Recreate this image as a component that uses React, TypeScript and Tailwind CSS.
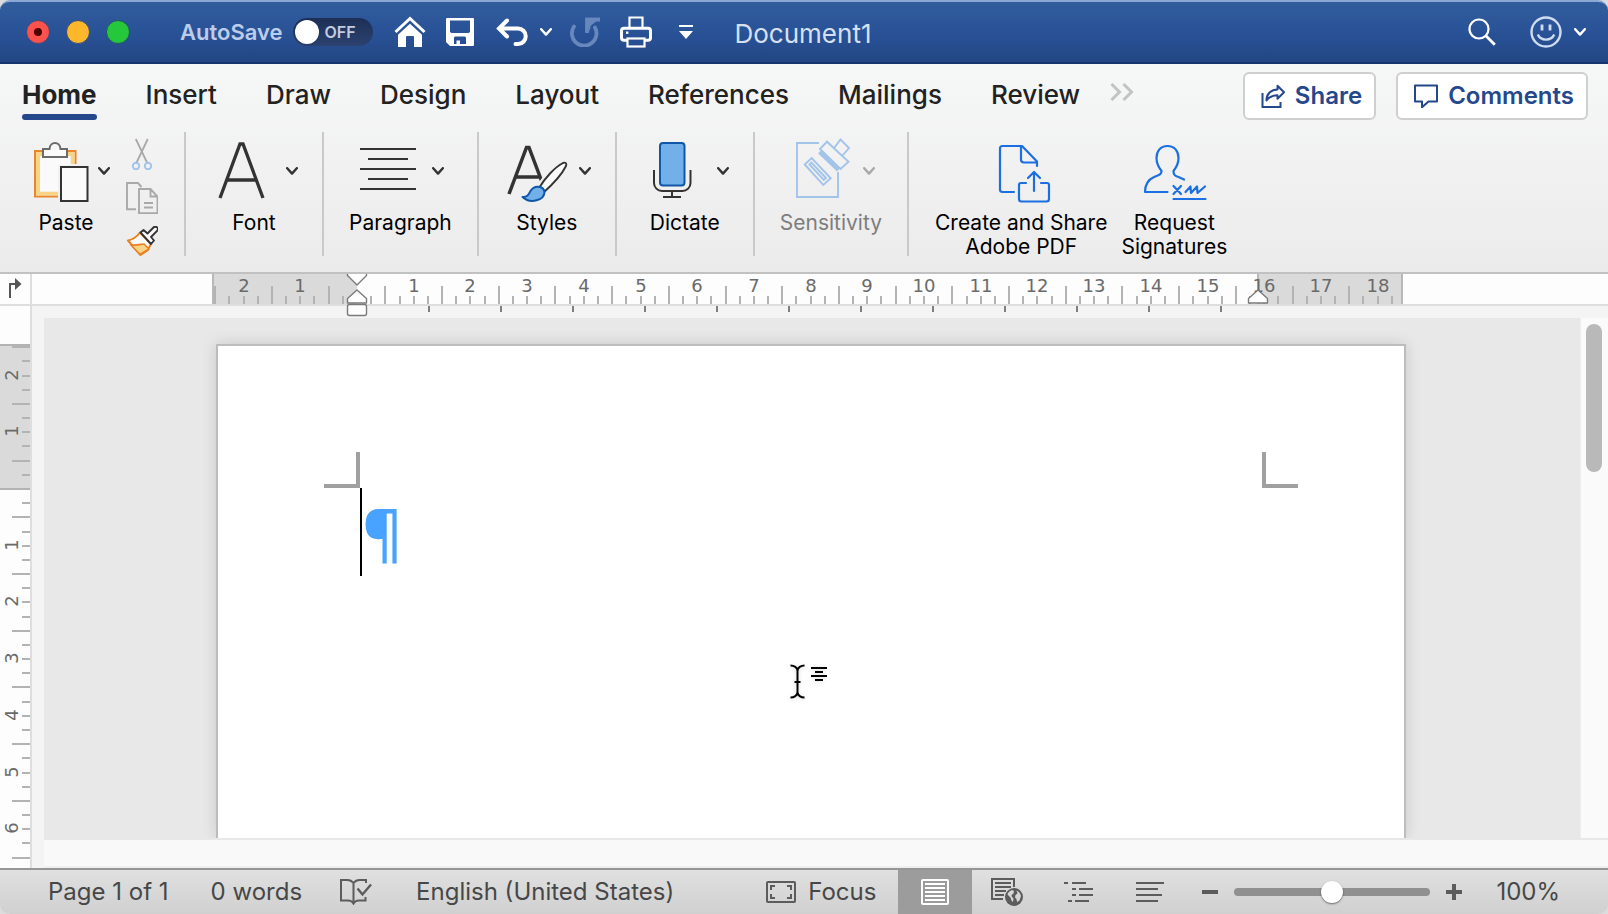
import type { ReactNode } from "react";

const CM = 56.7;

function Chevron({ className = "" }: { className?: string }) {
  return (
    <svg className={`h-2 w-3 shrink-0 ${className}`} viewBox="0 0 12 8" fill="none" stroke="currentColor" strokeWidth="2.4" strokeLinecap="round" strokeLinejoin="round" aria-hidden="true">
      <path d="M1.2 1.2 6 6.6 10.8 1.2" />
    </svg>
  );
}

/* ---------- title bar ---------- */

function TitleBar() {
  return (
    <header className="flex h-16 shrink-0 items-center rounded-t-[10px] border-t-2 border-b-2 border-t-[#8ba7d3] border-b-[#17356f] bg-gradient-to-b from-[#315d9c] via-[#295297] to-[#234784] pr-[22px] pl-[26px] text-white">
      <div className="flex gap-4">
        <button aria-label="Close" className="flex size-6 items-center justify-center rounded-full border border-[#3a4a80] bg-[#fc524d]">
          <span className="size-2 rounded-full bg-[#4d0000]" />
        </button>
        <button aria-label="Minimize" className="size-6 rounded-full border border-[#3a4a80] bg-[#fdb72b]" />
        <button aria-label="Zoom window" className="size-6 rounded-full border border-[#24506a] bg-[#25c83b]" />
      </div>
      <label className="ml-[50px] flex items-center gap-2.5 text-[22px] font-semibold text-[#bccdec]">
        AutoSave
        <span className="relative flex h-7 w-20 items-center rounded-full bg-gradient-to-b from-[#1d2f55] to-[#2c4270]">
          <input type="checkbox" className="peer absolute inset-0 cursor-pointer appearance-none rounded-full" />
          <span className="pointer-events-none ml-0.5 size-6 rounded-full bg-white shadow" />
          <span className="pointer-events-none ml-1.5 text-base text-[#c3cde0]">OFF</span>
        </span>
      </label>
      <button aria-label="Home" className="ml-[21px]">
        <svg className="h-8 w-8" viewBox="0 0 32 32" fill="none">
          <path d="M1.500 16 16 2.500 30.500 16" stroke="#fff" strokeWidth="3" />
          <path d="M16 7.800 4 18.800V31h8V21a1 1 0 0 1 1-1h6a1 1 0 0 1 1 1v10h8V18.800Z" fill="#fff" />
        </svg>
      </button>
      <button aria-label="Save" className="ml-5">
        <svg className="size-7" viewBox="0 0 28 28">
          <path fillRule="evenodd" fill="#fff" d="M1 0h26a1 1 0 0 1 1 1v26a1 1 0 0 1-1 1H4L0 24V1a1 1 0 0 1 1-1Zm3 2.600V14l1.500 1h17l1.500-1V2.600Zm4 17V26h2.500v-3.500H14V26h6v-6.400l-1-1H9Z" />
        </svg>
      </button>
      <button aria-label="Undo" className="ml-[22px]">
        <svg className="h-7 w-8" viewBox="0 0 32 28" fill="none" stroke="#fff" strokeWidth="4" strokeLinecap="round">
          <path d="M11 2.500 3 10.500 11 18.500M4 10.500h18a7.500 7.500 0 0 1 0 15.500h-2.500" />
        </svg>
      </button>
      <button aria-label="Undo history" className="ml-3">
        <Chevron />
      </button>
      <button aria-label="Redo" className="ml-[18px]" disabled>
        <svg className="size-[30px]" viewBox="0 0 30 30" fill="none" stroke="#6787bd" strokeWidth="3.800">
          <path d="M4 9.500A12.300 12.300 0 1 0 25 10.500" strokeLinecap="round" />
          <path d="M17 16V2.500H30" />
          <path d="M17 3h11l-7 5.500-2 6.500Z" fill="#6787bd" stroke="none" />
        </svg>
      </button>
      <button aria-label="Print" className="ml-5">
        <svg className="size-8" viewBox="0 0 32 32" fill="none" stroke="#fff">
          <path d="M9.500 12V1.500h13V12" strokeWidth="2.200" />
          <rect x="1.500" y="12.200" width="29" height="12" rx="2.500" strokeWidth="3" />
          <rect x="7.500" y="22.500" width="17" height="8" fill="#274e92" strokeWidth="2.200" />
          <rect x="6" y="15.500" width="2.400" height="2.400" fill="#fff" stroke="none" />
        </svg>
      </button>
      <button aria-label="Customize toolbar" className="ml-[27px]">
        <svg className="h-4 w-3.5" viewBox="0 0 14 16" fill="#fff">
          <path d="M0 1h14v2H0ZM0 7h14L7 15Z" />
        </svg>
      </button>
      <h1 className="ml-[42px] pt-1 text-[26px] leading-8 font-normal text-[#d7e0f1]">Document1</h1>
      <button aria-label="Search" className="ml-auto">
        <svg className="size-7" viewBox="0 0 28 28" fill="none" stroke="#fff" strokeWidth="2.200">
          <circle cx="11" cy="11" r="9.500" />
          <path d="m17.800 17.800 9 9" strokeWidth="2.800" />
        </svg>
      </button>
      <button aria-label="Send feedback" className="ml-[34px] flex items-center gap-3">
        <svg className="size-8" viewBox="0 0 32 32" fill="none" stroke="#d0dcf0" strokeWidth="2.400">
          <circle cx="16" cy="16" r="14.500" />
          <path d="M12 8.500v6M20 8.500v6" strokeWidth="2.800" />
          <path d="M7.800 18.500c3 6.800 13.400 6.800 16.400 0" />
        </svg>
        <Chevron />
      </button>
    </header>
  );
}

/* ---------- ribbon ---------- */

const TABS = ["Home", "Insert", "Draw", "Design", "Layout", "References", "Mailings", "Review"];

function Tabs() {
  return (
    <div className="flex items-start pt-2 pr-5 pl-[22px]">
      <nav className="flex items-start gap-[49px] pt-[7px] text-[26px] leading-8 text-[#222]">
        {TABS.map((tab, i) => (
          <button key={tab} className={i === 0 ? "flex flex-col gap-[3px] font-bold" : "font-medium"}>
            {tab}
            {i === 0 && <span className="h-1.5 w-full rounded-full bg-[#25488c]" />}
          </button>
        ))}
      </nav>
      <button aria-label="More tabs" className="ml-[30px] pt-[11px]">
        <svg className="h-[18px] w-6" viewBox="0 0 24 18" fill="none" stroke="#c3c3c3" strokeWidth="3">
          <path d="m1.500 1 8 8-8 8M13.500 1l8 8-8 8" />
        </svg>
      </button>
      <div className="ml-auto flex gap-5 text-[24px] leading-[30px] font-semibold text-[#25488c]">
        <button className="flex h-12 items-center gap-2.5 rounded-md border-2 border-[#cfcfcf] bg-white pr-3 pl-4">
          <svg className="h-6 w-6" viewBox="0 0 24 24" fill="none" stroke="currentColor" strokeWidth="2">
            <path d="M1.500 9v14h18v-5" />
            <path d="M16.500 1.800 23 8.300l-6.500 6.500v-3.600c-5 0-8 1.300-11 5.300 0-6.500 4.500-11 11-11Z" strokeLinejoin="round" />
          </svg>
          Share
        </button>
        <button className="flex h-12 items-center gap-2.5 rounded-md border-2 border-[#cfcfcf] bg-white pr-3 pl-4">
          <svg className="h-6 w-6" viewBox="0 0 24 24" fill="none" stroke="currentColor" strokeWidth="2" strokeLinejoin="round">
            <path d="M1 1.500h22v16h-8.500L8 23.300V17.500H1Z" />
          </svg>
          Comments
        </button>
      </div>
    </div>
  );
}

function BigIcon({ viewBox, children }: { viewBox: string; children: ReactNode }) {
  return (
    <svg className="h-[66px] w-[66px] shrink-0 overflow-visible" viewBox={viewBox} fill="none" aria-hidden="true">
      {children}
    </svg>
  );
}

function Tool({ label, icon, disabled = false }: { label: string; icon: ReactNode; disabled?: boolean }) {
  return (
    <button disabled={disabled} className={disabled ? "flex flex-col items-center text-[#7d7d7d]" : "flex flex-col items-center text-black"}>
      <span className="flex items-center gap-2.5">
        {icon}
        <Chevron className={disabled ? "mt-1 text-[#a9a9a9]" : "mt-1 text-[#333]"} />
      </span>
      <span className="mt-[9px] px-px text-[21px] leading-6">{label}</span>
    </button>
  );
}

function Group({ children }: { children: ReactNode }) {
  return <div className="flex min-w-[138px] justify-center border-r-2 border-[#c9c9c9] px-6 pt-1">{children}</div>;
}

function Ribbon() {
  return (
    <section className="flex h-[208px] shrink-0 flex-col justify-between bg-gradient-to-b from-[#f6f7f7] via-[#f1f1f1] to-[#ebebeb] pb-4">
      <Tabs />
      <div className="flex h-[124px]">
        <div className="flex border-r-2 border-[#c9c9c9] pr-[26px] pl-[22px]">
          <div className="w-22 pt-1">
            <Tool
              label="Paste"
              icon={
                <BigIcon viewBox="22 136 66 66">
                  <path d="M58 196.500H35V151h40.500v13" stroke="#e9852a" strokeWidth="2" />
                  <path d="M58 195.500H36V152h38.500v12h-4v-8H40v35.500h18Z" fill="#f8d487" />
                  <path d="M40 156h30.500v9H58v26.500H40Z" fill="#fafafa" />
                  <path d="M43 157v-8h6.500c.5-8 10.500-8 11 0H67v8Z" fill="#fafafa" stroke="#6b6b6b" strokeWidth="2" />
                  <rect x="61" y="167" width="26.500" height="34" fill="#fafafa" stroke="#333" strokeWidth="2" />
                </BigIcon>
              }
            />
          </div>
          <div className="ml-4 flex flex-col gap-3">
            <button aria-label="Cut" disabled className="mt-1.5">
              <svg className="size-8" viewBox="126 138 32 32" fill="none">
                <path d="M135.800 139l11.700 24.500M147.800 139l-11.700 24.500" stroke="#a9a9a9" strokeWidth="1.800" />
                <circle cx="136" cy="166" r="3.200" stroke="#a3c3e8" strokeWidth="1.900" />
                <circle cx="148" cy="166" r="3.200" stroke="#a3c3e8" strokeWidth="1.900" />
              </svg>
            </button>
            <button aria-label="Copy" disabled>
              <svg className="size-8" viewBox="126 182 32 32" fill="none" stroke="#a9a9a9" strokeWidth="1.900">
                <path d="M136 209.200h-9V183h11l3.500 4" />
                <path d="M139 189h11.500l7 7.500v16.700H139ZM150.500 189v7.500h7M144 203h9M144 207.500h9" />
              </svg>
            </button>
            <button aria-label="Format painter">
              <svg className="size-8" viewBox="126 226 32 32" fill="none">
                <path d="M128 240.500c5-1 9-4 12-8l11 11.500-3.500 6.500-7 4.500Z" fill="#fafafa" stroke="#ea8024" strokeWidth="2" strokeLinejoin="round" />
                <path d="M131 245c5 .5 9-.5 13-1l5 5-9 5.500Z" fill="#f8d487" stroke="#ea8024" strokeWidth="1.600" strokeLinejoin="round" />
                <path d="m140.500 232.500 3-2.500 4 3.500 6.500-6.500c2.500-1 4.500 1 3.500 3.500l-6.500 6.500 3 3.500-3 3.500Z" fill="#fafafa" stroke="#333" strokeWidth="1.900" strokeLinejoin="round" />
              </svg>
            </button>
          </div>
        </div>

        <Group>
          <Tool
            label="Font"
            icon={
              <BigIcon viewBox="210 136 66 66">
                <path d="M220 198 240 144h3l20 54M227 180h29" stroke="#333" strokeWidth="3.300" />
              </BigIcon>
            }
          />
        </Group>
        <Group>
          <Tool
            label="Paragraph"
            icon={
              <BigIcon viewBox="356 136 66 66">
                <path d="M360 149h56M368 159h40M360 169h56M368 179h40M360 189h56" stroke="#333" strokeWidth="2" />
              </BigIcon>
            }
          />
        </Group>
        <Group>
          <Tool
            label="Styles"
            icon={
              <BigIcon viewBox="502 136 66 66">
                <path d="M508 194 525.500 147.500h2.500L541 182M514 177h24" stroke="#333" strokeWidth="3.500" />
                <path d="M537 188c6-10 17-21 25-25 2.500-1 4 .5 3 3-4 8-14 19-23 27Z" fill="#fafafa" stroke="#f0f0f0" strokeWidth="5" />
                <path d="M538 188c6-10 16-21 24-25 2.500-1 4 .5 3 3-4 8-14 19-23 27Z" fill="#fafafa" stroke="#333" strokeWidth="1.900" />
                <path d="M521.500 197c5 .5 6-2.500 8-6 4-6.500 13-5 14 1 0 8-14 12.500-22 5Z" fill="#72b0ea" stroke="#0f57a8" strokeWidth="2" strokeLinejoin="round" />
              </BigIcon>
            }
          />
        </Group>
        <Group>
          <Tool
            label="Dictate"
            icon={
              <BigIcon viewBox="640 136 66 66">
                <rect x="659" y="143" width="24.500" height="42.500" rx="3" fill="#72b0ea" stroke="#0f57a8" strokeWidth="2" />
                <path d="M653 170v13a8 8 0 0 0 8 8h20.500a8 8 0 0 0 8-8v-13M671 191v6M662 197h18" stroke="#333" strokeWidth="2" />
              </BigIcon>
            }
          />
        </Group>
        <Group>
          <Tool
            label="Sensitivity"
            disabled
            icon={
              <BigIcon viewBox="787 136 66 66">
                <g stroke="#a3c4e9" strokeWidth="1.900">
                  <path d="M819 143h-22v54h41v-25" />
                  <path d="m804.700 164.500 7-6.500 19 20.300-7.400 6.700Z" />
                  <path d="m809.500 164.500 2-2 14.500 15.500-2.200 2Z" />
                  <path d="m820 149 7-7.300 21.500 20-8 7.300ZM834.500 147.500l6-8 8.500 8.500-6.500 7.500" />
                  <path d="m819.500 152 19 18" strokeWidth="4" />
                </g>
              </BigIcon>
            }
          />
        </Group>

        <div className="flex gap-3.5 pt-1 pl-[26px]">
          <button className="flex flex-col items-center">
            <BigIcon viewBox="990 136 66 66">
              <g stroke="#1b6fe2" strokeWidth="2.200" strokeLinecap="round" strokeLinejoin="round">
                <path d="M1016 192h-11.500a2.500 2.500 0 0 1-2.500-2.500v-41a2.500 2.500 0 0 1 2.500-2.500H1024l15 15.500v4.500M1023 146.500v13a3 3 0 0 0 3 3h12.500" />
                <path d="M1028 183h-5a2 2 0 0 0-2 2v14a2.500 2.500 0 0 0 2.500 2.500h25a2.500 2.500 0 0 0 2.500-2.500v-14a2 2 0 0 0-2-2h-6M1036 191v-18.500M1030 178l6-6 6 6" />
              </g>
            </BigIcon>
            <span className="mt-[9px] text-[21px] leading-6">
              Create and Share
              <br />
              Adobe PDF
            </span>
          </button>
          <button className="flex flex-col items-center">
            <BigIcon viewBox="1140 136 66 66">
              <g stroke="#1b6fe2" strokeWidth="2.200" strokeLinecap="round" strokeLinejoin="round">
                <path d="M1166.500 192h-22.500c0-8 3.500-12.500 9-15 4-2 7.500-1.500 7.500-6-2-2.500-5-6.500-5-13 0-7 4-12 11-12s11 5 11 12c0 6.500-3 10.500-5 13 0 4 1.500 5 5 6l5.500 2.500" />
                <path d="m1172.500 186 7.500 8m0-8-7.500 8M1184.500 192l5-5.500.5 6.500 6-6.500.5 6.500 7.500-6.500M1172.500 199h32" />
              </g>
            </BigIcon>
            <span className="mt-[9px] text-[21px] leading-6">
              Request
              <br />
              Signatures
            </span>
          </button>
        </div>
      </div>
    </section>
  );
}

/* ---------- rulers ---------- */

function quarterMarks(from: number, to: number) {
  const marks: number[] = [];
  for (let q = from; q <= to; q++) if (q !== 0) marks.push(q);
  return marks;
}

const isHalf = (q: number) => Math.abs(q) % 4 === 2;

function HorizontalRuler() {
  const origin = 144;
  const labels = [-2, -1, ...Array.from({ length: 18 }, (_, i) => i + 1)];
  return (
    <div className="flex h-[34px] shrink-0 border-t-2 border-b-2 border-t-[#c1c1c1] border-b-[#dedede] bg-[#fdfdfd]">
      <button aria-label="Tab stop type" className="w-8 shrink-0 border-r-2 border-[#dedede]">
        <svg className="h-[30px] w-[30px]" viewBox="0 0 30 30">
          <path d="M10 24V10h6" fill="none" stroke="#555" strokeWidth="2" />
          <path d="M15 4v12l6.500-6Z" fill="#555" />
        </svg>
      </button>
      <div className="flex flex-1 justify-center pr-6">
        <svg className="relative z-10 h-[30px] w-[1190px] shrink-0 overflow-visible" viewBox="0 0 1190 30">
          <rect width="144" height="30" fill="#dadada" />
          <rect x="1045" width="145" height="30" fill="#dadada" />
          <path d="M0 0v30M1189 0v30M1045 0v30" stroke="#b8b8b8" strokeWidth="2" />
          {quarterMarks(-10, 73).map((q) => {
            const x = Math.round(origin + (q * CM) / 4);
            return <path key={q} d={`M${x} ${isHalf(q) ? 12 : 22}V30`} stroke="#b3b3b3" strokeWidth="2" />;
          })}
          {Array.from({ length: 12 }, (_, i) => (
            <path key={i} d={`M${216 + i * 72} 32v6`} stroke="#808080" strokeWidth="2" />
          ))}
          <g fill="#6a6a6a" fontFamily="'DejaVu Sans', sans-serif" fontSize="18" textAnchor="middle">
            {labels.map((n) => (
              <text key={n} x={Math.round(origin + n * CM)} y="18">
                {Math.abs(n)}
              </text>
            ))}
          </g>
          <g fill="#fff" stroke="#7a7a7a" strokeWidth="1.400" strokeLinejoin="round">
            <path d="M134.500 0v1.500L144 11l9.500-9.500V0" />
            <path d="M144 16l9.500 8.500V29h-19v-4.500Z" />
            <rect x="134.500" y="30.500" width="19" height="11" rx="2" />
            <path d="M1045 16l9.500 8.500V29h-19v-4.500Z" />
          </g>
        </svg>
      </div>
    </div>
  );
}

function VerticalRuler() {
  const origin = 183;
  return (
    <div className="w-8 shrink-0 overflow-hidden border-r-2 border-[#dedede] bg-[#fdfdfd]">
      <svg className="h-[562px] w-[30px]" viewBox="0 0 30 562">
        <rect y="38" width="30" height="145" fill="#dadada" />
        <path d="M0 39h30M0 183h30" stroke="#b3b3b3" strokeWidth="2" />
        {quarterMarks(-10, 26).map((q) => {
          const y = Math.round(origin + (q * CM) / 4);
          return <path key={q} d={`M${isHalf(q) ? 12 : 22} ${y}H30`} stroke="#b3b3b3" strokeWidth="2" />;
        })}
        <g fill="#6a6a6a" fontFamily="'DejaVu Sans', sans-serif" fontSize="18" textAnchor="middle">
          {[-2, -1, 1, 2, 3, 4, 5, 6].map((n) => (
            <text key={n} transform={`translate(18 ${Math.round(origin + n * CM) - 1}) rotate(-90)`}>
              {Math.abs(n)}
            </text>
          ))}
        </g>
      </svg>
    </div>
  );
}

/* ---------- document ---------- */

function Page() {
  return (
    <main className="relative min-w-0 flex-1 overflow-hidden bg-[#e8e8e8] pt-[26px] pr-0.5">
      <article className="mx-auto h-full w-[1190px] border-2 border-b-0 border-[#bdbdbd] bg-white pt-[106px] shadow-[0_0_14px_rgba(0,0,0,0.14)]">
        <div className="flex justify-between px-[106px]">
          <span className="h-9 w-9 border-r-4 border-b-4 border-[#a0a0a0]" />
          <span className="h-9 w-9 border-b-4 border-l-4 border-[#a0a0a0]" />
        </div>
        <div role="textbox" aria-label="Document text" className="flex h-[88px] items-center pl-[142px] font-['Open_Sans',sans-serif] text-[62px] leading-[88px] font-semibold text-[#47a3ff]">
          <span className="h-full w-0.5 bg-black" />
          <span>¶</span>
        </div>
      </article>
      <svg className="pointer-events-none absolute top-[342px] left-[742px] h-11 w-12 drop-shadow-sm" viewBox="0 0 48 44" fill="none" stroke="#000" strokeWidth="2">
        <path d="M4.500 5.500c3.500 0 7 2 7 5.500 0-3.500 3.500-5.500 7-5.500M11.500 10v23M4.500 37.500c3.500 0 7-2 7-5.500 0 3.500 3.500 5.500 7 5.500M8.500 22h6" />
        <path d="M25 8h16M29 12h8M25 16h16M29 20h8" />
      </svg>
    </main>
  );
}

function Workspace() {
  return (
    <div className="flex min-h-0 flex-1">
      <VerticalRuler />
      <div className="flex min-w-0 flex-1 flex-col bg-[#f4f4f4] pt-3 pl-3">
        <div className="flex min-h-0 flex-1">
          <Page />
          <div className="w-7 shrink-0 border-l border-[#efefef] bg-[#fafafa] px-[5px] pt-1.5">
            <div role="scrollbar" aria-label="Scroll document" aria-controls="root" aria-valuenow={0} className="h-[148px] w-4 rounded-full bg-[#b9b9b9]" />
          </div>
        </div>
        <div className="h-[30px] shrink-0 border-t-2 border-b-2 border-t-[#e8e8e8] border-b-[#efefef] bg-[#f9f9f9]" />
      </div>
    </div>
  );
}

/* ---------- status bar ---------- */

function StatusBar() {
  return (
    <footer className="flex h-[46px] shrink-0 items-center rounded-b-[10px] border-t-2 border-[#969696] bg-gradient-to-b from-[#e0e0e0] to-[#d0d0d0] pr-12 pl-12 text-[24px] text-[#474747]">
      <span>Page 1 of 1</span>
      <span className="ml-[42px]">0 words</span>
      <button aria-label="Spelling and grammar" className="ml-[38px]">
        <svg className="h-[26px] w-8" viewBox="0 0 32 26" fill="none" stroke="#5c5c5c" strokeWidth="2">
          <path d="M13.500 25V4c-2-2.500-4-3-6-3H1v20.500h7c3 0 4.500 1 5.500 3 1-2 2.500-3 5.500-3h6.500V18M13.500 4c2-2.500 4-3 6-3H26v3" />
          <path d="m17.500 9.500 5 6 8.500-10" strokeWidth="2.400" />
        </svg>
      </button>
      <button className="ml-11">English (United States)</button>

      <div className="ml-auto flex h-full items-center">
        <button className="flex items-center gap-3">
          <svg className="h-[22px] w-[30px]" viewBox="0 0 30 22" fill="none" stroke="#5c5c5c" strokeWidth="2">
            <rect x="1" y="1" width="28" height="20" rx="1" />
            <path d="M5 9V5h4M21 5h4v4M25 13v4h-4M9 17H5v-4" />
          </svg>
          Focus
        </button>
        <button aria-label="Print layout" aria-pressed="true" className="ml-[22px] flex h-full w-[74px] items-center justify-center bg-[#9c9c9c]">
          <svg className="h-[26px] w-7" viewBox="0 0 28 26" fill="none" stroke="#fff" strokeWidth="2">
            <rect x="1" y="1" width="26" height="24" rx="1" />
            <path d="M4 5h20M4 9h20M4 13h20M4 17h20M4 21h20" />
          </svg>
        </button>
        <button aria-label="Web layout" className="ml-[19px]">
          <svg className="h-7 w-8" viewBox="0 0 32 28" fill="none" stroke="#5c5c5c" strokeWidth="2">
            <path d="M12 21H1V1h22v8M4 5h16M4 9h16M4 13h11M4 17h9" />
            <circle cx="23" cy="19" r="9" fill="#5c5c5c" stroke="none" />
            <path d="M16.500 16.500c.5-2 2.500-4 4.500-4.500l2 1-.5 2.500-2 1.500.5 2 1.500 1.500-.5 3.500c-1.500-.5-2-3-2.500-4.500ZM25.500 12.500c2.500 1 4 3 4.500 5.500l-1.500 4.500-2.500 1.500-.5-3-1.500-1.500.5-2.500 2-1.500Z" fill="#d6d6d6" stroke="none" />
          </svg>
        </button>
        <button aria-label="Outline" className="ml-[41px]">
          <svg className="h-5 w-[30px]" viewBox="0 0 30 20" fill="none" stroke="#5c5c5c" strokeWidth="2">
            <path d="M0 1h4M8 1h14M8 7h4M15 7h14M8 13h4M15 13h14M4 19h4M11 19h14" />
          </svg>
        </button>
        <button aria-label="Draft" className="ml-[42px]">
          <svg className="h-5 w-7" viewBox="0 0 28 20" fill="none" stroke="#5c5c5c" strokeWidth="2">
            <path d="M0 1h28M0 7h22M0 13h26M0 19h22" />
          </svg>
        </button>
        <button aria-label="Zoom out" className="ml-[38px]">
          <svg className="size-4" viewBox="0 0 16 16" stroke="#5c5c5c" strokeWidth="4">
            <path d="M0 8h16" />
          </svg>
        </button>
        <input
          type="range"
          aria-label="Zoom"
          min={0}
          max={200}
          defaultValue={100}
          className="ml-4 h-2 w-[196px] appearance-none rounded-full bg-[#909090] [&::-webkit-slider-thumb]:size-[22px] [&::-webkit-slider-thumb]:appearance-none [&::-webkit-slider-thumb]:rounded-full [&::-webkit-slider-thumb]:bg-white [&::-webkit-slider-thumb]:shadow-[0_1px_2px_rgba(0,0,0,0.5)]"
        />
        <button aria-label="Zoom in" className="ml-4">
          <svg className="size-4" viewBox="0 0 16 16" stroke="#5c5c5c" strokeWidth="4">
            <path d="M0 8h16M8 0v16" />
          </svg>
        </button>
        <span className="ml-[34px]">100%</span>
      </div>
    </footer>
  );
}

export default function App() {
  return (
    <div className="flex h-screen flex-col overflow-hidden bg-[#dcdcdc] font-['Inter',sans-serif]">
      <TitleBar />
      <Ribbon />
      <HorizontalRuler />
      <Workspace />
      <StatusBar />
    </div>
  );
}
